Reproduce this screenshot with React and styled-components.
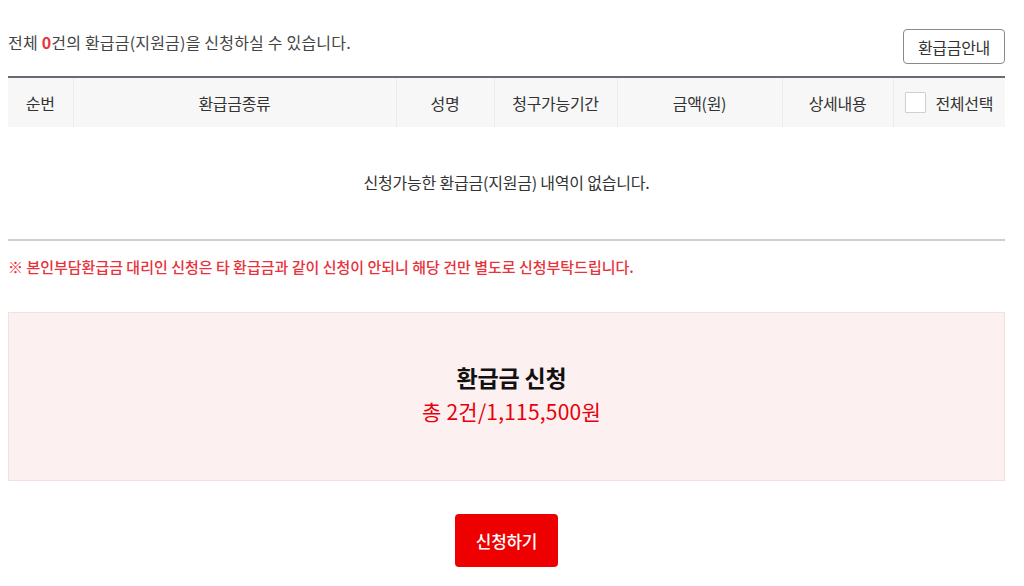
import React from 'react';
import styled, { createGlobalStyle } from 'styled-components';

const GlobalStyle = createGlobalStyle`
  html, body {
    margin: 0;
    padding: 0;
    background: #fff;
  }
  body {
    font-family: "Noto Sans CJK KR", "Noto Sans", sans-serif;
    color: #333;
  }
`;

const Page = styled.div`
  width: 997px;
  padding: 29px 0 0 8px;
`;

const TopBar = styled.div`
  display: flex;
  align-items: center;
  justify-content: space-between;
  height: 35px;
`;

const Summary = styled.p`
  margin: 0;
  margin-top: -10px;
  font-size: 16px;
  color: #444;
  letter-spacing: 0.2px;

  strong {
    color: #e8323c;
    font-weight: bold;
  }
`;

const GuideButton = styled.button`
  width: 102px;
  height: 35px;
  border: 1.5px solid #8a8a8a;
  border-radius: 4px;
  background: #fff;
  font-family: inherit;
  font-size: 16px;
  color: #333;
  letter-spacing: -0.3px;
  cursor: pointer;
  padding: 0;
`;

const Table = styled.table`
  margin-top: 12px;
  width: 100%;
  border-collapse: collapse;
  border-top: 2px solid #6a6a72;
  border-bottom: 2px solid #cfcfcf;
  table-layout: fixed;
`;

const Th = styled.th`
  height: 49px;
  background: #f7f7f7;
  border-left: 1px solid #ececec;
  font-size: 16px;
  font-weight: normal;
  color: #333;
  letter-spacing: -0.3px;
  padding: 0;

  &:first-child {
    border-left: none;
  }
`;

const EmptyCell = styled.td`
  height: 109px;
  text-align: center;
  font-size: 16px;
  color: #333;
  letter-spacing: -0.2px;
  padding: 0 0 3px;
`;

const CheckLabel = styled.label`
  display: flex;
  align-items: center;
  justify-content: center;
  gap: 9px;
`;

const CheckBox = styled.span`
  width: 21px;
  height: 21px;
  box-sizing: border-box;
  border: 1px solid #cfcfcf;
  background: #fff;
  border-radius: 1px;
`;

const Notice = styled.p`
  margin: 16px 0 0;
  font-size: 15px;
  line-height: 20px;
  font-weight: 500;
  color: #e8323c;
  letter-spacing: 0px;
`;

const TotalBox = styled.div`
  margin-top: 35px;
  height: 167px;
  box-sizing: content-box;
  padding: 0 0 7px 10px;
  height: 160px;
  background: #fdf0f0;
  border: 1px solid #f4e0e0;
  display: flex;
  flex-direction: column;
  align-items: center;
  justify-content: center;
  gap: 5px;
`;

const TotalTitle = styled.div`
  font-size: 23px;
  line-height: 30px;
  font-weight: bold;
  color: #111;
  letter-spacing: -0.2px;
`;

const TotalAmount = styled.div`
  font-size: 21px;
  line-height: 28px;
  color: #e8000a;
  letter-spacing: 0.2px;
`;

const Actions = styled.div`
  display: flex;
  justify-content: center;
  margin-top: 33px;
`;

const SubmitButton = styled.button`
  width: 103px;
  height: 53px;
  border: none;
  border-radius: 4px;
  background: #ee0000;
  color: #fff;
  font-family: inherit;
  font-size: 17px;
  font-weight: 500;
  letter-spacing: -0.3px;
  cursor: pointer;
`;

const columns = [
  { label: '순번', width: 65 },
  { label: '환급금종류', width: 323 },
  { label: '성명', width: 98 },
  { label: '청구가능기간', width: 123 },
  { label: '금액(원)', width: 165 },
  { label: '상세내용', width: 111 },
];

export default function App() {
  return (
    <>
      <GlobalStyle />
      <Page>
        <TopBar>
          <Summary>
            전체 <strong>0</strong>건의 환급금(지원금)을 신청하실 수 있습니다.
          </Summary>
          <GuideButton>환급금안내</GuideButton>
        </TopBar>

        <Table>
          <colgroup>
            {columns.map(c => <col key={c.label} style={{ width: c.width }} />)}
            <col />
          </colgroup>
          <thead>
            <tr>
              {columns.map(c => <Th key={c.label}>{c.label}</Th>)}
              <Th>
                <CheckLabel>
                  <CheckBox />
                  전체선택
                </CheckLabel>
              </Th>
            </tr>
          </thead>
          <tbody>
            <tr>
              <EmptyCell colSpan={7}>신청가능한 환급금(지원금) 내역이 없습니다.</EmptyCell>
            </tr>
          </tbody>
        </Table>

        <Notice>※ 본인부담환급금 대리인 신청은 타 환급금과 같이 신청이 안되니 해당 건만 별도로 신청부탁드립니다.</Notice>

        <TotalBox>
          <TotalTitle>환급금 신청</TotalTitle>
          <TotalAmount>총 2건/1,115,500원</TotalAmount>
        </TotalBox>

        <Actions>
          <SubmitButton>신청하기</SubmitButton>
        </Actions>
      </Page>
    </>
  );
}
